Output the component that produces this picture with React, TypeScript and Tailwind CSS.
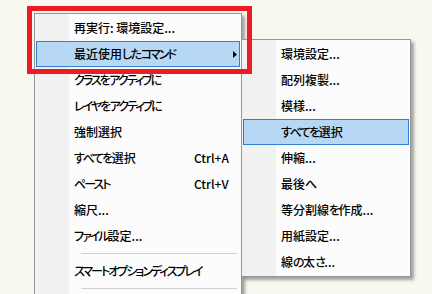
import React from "react";

type Item =
  | { kind: "item"; label: string; shortcut?: string; arrow?: boolean; active?: boolean }
  | { kind: "sep" };

const mainItems: Item[] = [
  { kind: "item", label: "再実行: 環境設定..." },
  { kind: "item", label: "最近使用したコマンド", arrow: true, active: true },
  { kind: "item", label: "クラスをアクティブに" },
  { kind: "item", label: "レイヤをアクティブに" },
  { kind: "item", label: "強制選択" },
  { kind: "item", label: "すべてを選択", shortcut: "Ctrl+A" },
  { kind: "item", label: "ペースト", shortcut: "Ctrl+V" },
  { kind: "item", label: "縮尺..." },
  { kind: "item", label: "ファイル設定..." },
  { kind: "sep" },
  { kind: "item", label: "スマートオプションディスプレイ" },
  { kind: "sep" },
];

const subItems: Item[] = [
  { kind: "item", label: "環境設定..." },
  { kind: "item", label: "配列複製..." },
  { kind: "item", label: "模様..." },
  { kind: "item", label: "すべてを選択", active: true },
  { kind: "item", label: "伸縮..." },
  { kind: "item", label: "最後へ" },
  { kind: "item", label: "等分割線を作成..." },
  { kind: "item", label: "用紙設定..." },
  { kind: "item", label: "線の太さ..." },
];

type Kind = "kata" | "hira" | "other";
function kindOf(ch: string): Kind {
  const c = ch.charCodeAt(0);
  if ((c >= 0x30a0 && c <= 0x30ff)) return "kata";
  if (c >= 0x3040 && c <= 0x309f) return "hira";
  return "other";
}

function Label({ text }: { text: string }) {
  const runs: { k: Kind; s: string }[] = [];
  for (const ch of Array.from(text)) {
    const k = kindOf(ch);
    const last = runs[runs.length - 1];
    if (last && last.k === k) last.s += ch;
    else runs.push({ k, s: ch });
  }
  return (
    <>
      {runs.map((r, i) => (
        <span
          key={i}
          className={
            r.k === "kata" ? "tracking-[-2px]" : r.k === "hira" ? "tracking-[-1.5px]" : "tracking-normal"
          }
        >
          {r.s}
        </span>
      ))}
    </>
  );
}

function Row({ item }: { item: Item }) {
  if (item.kind === "sep") {
    return (
      <div className="h-[9px] flex items-center pl-[46px] pr-[4px]">
        <div className="h-px w-full bg-[#cfcfcf]" />
      </div>
    );
  }
  return (
    <div
      className={
        "mx-px h-[26px] flex items-center border pl-[37px] " +
        (item.active ? "bg-[#b6d8f5] border-[#2f80d4]" : "border-transparent")
      }
    >
      <span className="w-[120px] shrink-0 whitespace-nowrap">
        <Label text={item.label} />
      </span>
      {item.shortcut && <span className="whitespace-nowrap">{item.shortcut}</span>}
      {item.arrow && (
        <svg className="ml-auto mr-[2px]" width="4" height="7" viewBox="0 0 4 7">
          <polygon points="0,0 4,3.5 0,7" fill="#000" />
        </svg>
      )}
    </div>
  );
}

export default function App() {
  return (
    <div
      className="relative w-[432px] h-[294px] overflow-hidden bg-[#f8f8f0] text-[12px] font-medium leading-none text-black [font-feature-settings:'palt']"
      style={{ fontFamily: '"Noto Sans CJK JP", "Noto Sans", sans-serif' }}
    >
      {/* main context menu */}
      <div className="absolute left-[34px] top-[13px] w-[208px] h-[320px] border border-[#979797] bg-[linear-gradient(to_right,#f1f1f1_34px,#fcfcfc_34px)] pt-px shadow-[3px_3px_3px_rgba(0,0,0,0.35)]">
        {mainItems.map((it, i) => (
          <Row key={i} item={it} />
        ))}
      </div>

      {/* submenu */}
      <div className="absolute left-[241px] top-[39px] w-[170px] border border-[#979797] bg-[linear-gradient(to_right,#f1f1f1_34px,#fcfcfc_34px)] py-px shadow-[3px_3px_3px_rgba(0,0,0,0.35)]">
        {subItems.map((it, i) => (
          <Row key={i} item={it} />
        ))}
      </div>

      {/* red annotation box */}
      <div className="absolute left-[27px] top-[6px] w-[225px] h-[68px] border-[5px] border-[#ec1c24]" />
    </div>
  );
}
